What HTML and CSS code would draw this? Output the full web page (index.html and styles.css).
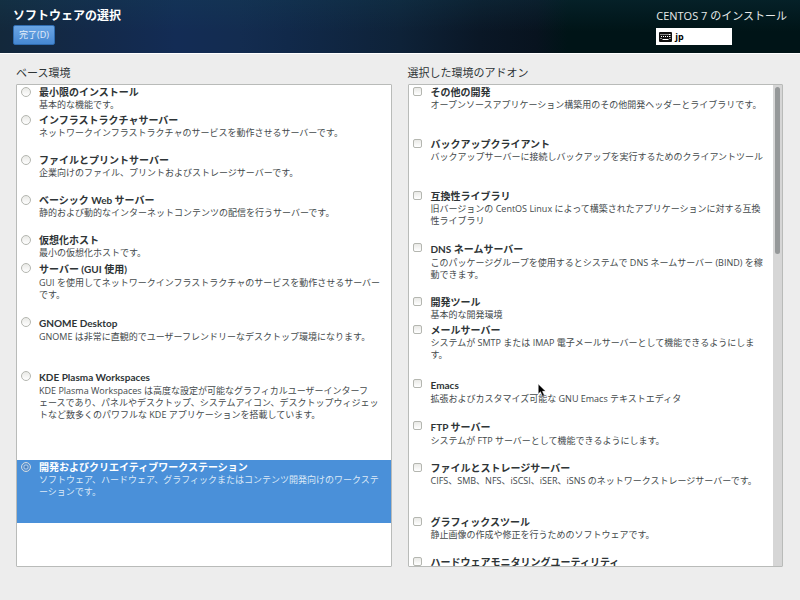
FILE: index.html
```html
<!DOCTYPE html>
<html lang="ja">
<head>
    <meta charset="UTF-8">
    <meta name="viewport" content="width=device-width, initial-scale=1.0">
    <title>ソフトウェアの選択</title>
    <link rel="stylesheet" href="styles.css">
</head>
<body>
    <header class="topbar">
        <div class="topbar-left">
            <h1>ソフトウェアの選択</h1>
            <button type="button" class="done">完了(D)</button>
        </div>
        <div class="topbar-right">
            <p class="product">CENTOS 7 のインストール</p>
            <button type="button" class="keyboard">
                <svg width="13" height="10" viewBox="0 0 13 10">
                    <rect width="13" height="10" rx="1" fill="#111"/>
                    <path d="M1.5 2.5h1M3.500 2.5h1M5.500 2.5h1M7.500 2.5h1M9.500 2.5h2M2 4.5h1M4 4.5h1M6 4.5h1M8 4.5h1M10 4.5h1.500M1.500 6.5h1M10.500 6.5h1M3.500 7.5h6" stroke="#fff" fill="none"/>
                </svg>
                <span>jp</span>
            </button>
        </div>
    </header>

    <main class="columns">
        <section class="column">
            <h2>ベース環境</h2>
            <div class="panel">
                <div class="list">
                    <label class="row h28">
                        <input type="radio" name="env">
                        <span class="text"><b>最小限のインストール</b><span class="desc">基本的な機能です。</span></span>
                    </label>
                    <label class="row h40">
                        <input type="radio" name="env">
                        <span class="text"><b>インフラストラクチャサーバー</b><span class="desc">ネットワークインフラストラクチャのサービスを動作させるサーバーです。</span></span>
                    </label>
                    <label class="row h40">
                        <input type="radio" name="env">
                        <span class="text"><b>ファイルとプリントサーバー</b><span class="desc">企業向けのファイル、プリントおよびストレージサーバーです。</span></span>
                    </label>
                    <label class="row h40">
                        <input type="radio" name="env">
                        <span class="text"><b>ベーシック Web サーバー</b><span class="desc">静的および動的なインターネットコンテンツの配信を行うサーバーです。</span></span>
                    </label>
                    <label class="row h28">
                        <input type="radio" name="env">
                        <span class="text"><b>仮想化ホスト</b><span class="desc">最小の仮想化ホストです。</span></span>
                    </label>
                    <label class="row h54">
                        <input type="radio" name="env">
                        <span class="text"><b class="mixed">サーバー (GUI 使用)</b><span class="desc">GUI を使用してネットワークインフラストラクチャのサービスを動作させるサーバー<br>です。</span></span>
                    </label>
                    <label class="row h54">
                        <input type="radio" name="env">
                        <span class="text"><b class="mixed">GNOME Desktop</b><span class="desc">GNOME は非常に直観的でユーザーフレンドリーなデスクトップ環境になります。</span></span>
                    </label>
                    <label class="row h91">
                        <input type="radio" name="env">
                        <span class="text"><b class="mixed">KDE Plasma Workspaces</b><span class="desc">KDE Plasma Workspaces は高度な設定が可能なグラフィカルユーザーインターフ<br>ェースであり、パネルやデスクトップ、システムアイコン、デスクトップウィジェッ<br>トなど数多くのパワフルな KDE アプリケーションを搭載しています。</span></span>
                    </label>
                    <label class="row h63 selected">
                        <input type="radio" name="env" checked>
                        <span class="text"><b>開発およびクリエイティブワークステーション</b><span class="desc">ソフトウェア、ハードウェア、グラフィックまたはコンテンツ開発向けのワークステ<br>ーションです。</span></span>
                    </label>
                </div>
            </div>
        </section>

        <section class="column">
            <h2>選択した環境のアドオン</h2>
            <div class="panel">
                <div class="list">
                    <label class="row h52">
                        <input type="checkbox">
                        <span class="text"><b>その他の開発</b><span class="desc">オープンソースアプリケーション構築用のその他開発ヘッダーとライブラリです。</span></span>
                    </label>
                    <label class="row h52">
                        <input type="checkbox">
                        <span class="text"><b>バックアップクライアント</b><span class="desc">バックアップサーバーに接続しバックアップを実行するためのクライアントツール</span></span>
                    </label>
                    <label class="row h52">
                        <input type="checkbox">
                        <span class="text"><b>互換性ライブラリ</b><span class="desc">旧バージョンの CentOS Linux によって構築されたアプリケーションに対する互換<br>性ライブラリ</span></span>
                    </label>
                    <label class="row h54">
                        <input type="checkbox">
                        <span class="text"><b class="mixed">DNS ネームサーバー</b><span class="desc">このパッケージグループを使用するとシステムで DNS ネームサーバー (BIND) を稼<br>動できます。</span></span>
                    </label>
                    <label class="row h28">
                        <input type="checkbox">
                        <span class="text"><b>開発ツール</b><span class="desc">基本的な開発環境</span></span>
                    </label>
                    <label class="row h54">
                        <input type="checkbox">
                        <span class="text"><b>メールサーバー</b><span class="desc">システムが SMTP または IMAP 電子メールサーバーとして機能できるようにしま<br>す。</span></span>
                    </label>
                    <label class="row h42">
                        <input type="checkbox">
                        <span class="text"><b class="mixed">Emacs</b><span class="desc">拡張およびカスタマイズ可能な GNU Emacs テキストエディタ</span></span>
                    </label>
                    <label class="row h42">
                        <input type="checkbox">
                        <span class="text"><b class="mixed">FTP サーバー</b><span class="desc">システムが FTP サーバーとして機能できるようにします。</span></span>
                    </label>
                    <label class="row h54">
                        <input type="checkbox">
                        <span class="text"><b>ファイルとストレージサーバー</b><span class="desc">CIFS、SMB、NFS、iSCSI、iSER、iSNS のネットワークストレージサーバーです。</span></span>
                    </label>
                    <label class="row h40">
                        <input type="checkbox">
                        <span class="text"><b>グラフィックスツール</b><span class="desc">静止画像の作成や修正を行うためのソフトウェアです。</span></span>
                    </label>
                    <label class="row h40">
                        <input type="checkbox">
                        <span class="text"><b>ハードウェアモニタリングユーティリティ</b></span>
                    </label>
                </div>
                <div class="scrollbar"><div class="thumb"></div></div>
            </div>
        </section>
    </main>

    <svg class="pointer" width="9" height="13" viewBox="0 0 9 13">
        <path d="M.5 .5v9l2-2 2 4.500 1.500-.7-1.800-4.300h3z" fill="#000" stroke="#888" stroke-width=".4"/>
    </svg>
</body>
</html>
```

FILE: styles.css
```css
* {
    box-sizing: border-box;
}
body {
    display: flex;
    flex-direction: column;
    height: 100vh;
    margin: 0;
    overflow: hidden;
    background: #ededed;
    color: #2e3436;
    font-family: "Open Sans", "Noto Sans CJK JP", sans-serif;
    font-size: 9px;
    line-height: 12px;
}
h1, h2, p {
    margin: 0;
}
button {
    font-family: inherit;
}

/* header */
.topbar {
    display: flex;
    justify-content: space-between;
    flex: none;
    height: 54px;
    padding: 8px 13px;
    border-bottom: 1px solid #fff;
    background:
        linear-gradient(rgba(20,70,90,0.25), rgba(20,70,90,0) 60%),
        linear-gradient(90deg, #13283b 0, #13294a 12%, #132c55 22%, #132c50 30%, #11294a 36%, #0e2238 50%, #0a1726 60%, #08131f 67%, #001417 71%, #001417 100%);
    color: #fff;
}
.topbar-left, .topbar-right {
    display: flex;
    flex-direction: column;
    align-items: flex-start;
}
.topbar h1 {
    font-size: 12px;
    line-height: 16px;
}
.done {
    height: 20px;
    margin-top: 1px;
    padding: 0 5px;
    border: 1px solid #2f6cb0;
    border-radius: 2px;
    background: linear-gradient(#6aa5e4, #4688d2);
    color: #e4eefa;
    font-size: 9px;
    line-height: 16px;
}
.product {
    font-size: 11px;
    line-height: 16px;
    color: #e8eaea;
}
.keyboard {
    display: flex;
    align-items: center;
    gap: 3px;
    width: 76px;
    height: 17px;
    margin-top: 4px;
    padding: 0 3px;
    border: 0;
    background: #fff;
    color: #000;
    font-size: 9px;
    font-weight: bold;
}

/* two lists side by side */
.columns {
    display: grid;
    grid-template-columns: minmax(0, 1fr) minmax(0, 1fr);
    gap: 16px;
    flex: 1;
    min-height: 0;
    padding: 11px 17px 33px 16px;
}
.column {
    display: flex;
    flex-direction: column;
    min-height: 0;
}
.column h2 {
    height: 19px;
    font-size: 11px;
    font-weight: normal;
    line-height: 16px;
}
.panel {
    display: flex;
    flex: 1;
    min-height: 0;
    border: 1px solid #b9bbb9;
    border-radius: 1px;
    background: #fff;
}
.list {
    flex: 1;
    min-width: 0;
    overflow: hidden;
}
.row {
    display: flex;
    gap: 8px;
    padding: 1px 4px;
    white-space: nowrap;
}
.h28 { height: 28px; }
.h40 { height: 40px; }
.h42 { height: 42px; }
.h52 { height: 52px; }
.h54 { height: 54px; }
.h63 { height: 63px; }
.h91 { height: 91px; }

.text b, .desc {
    display: block;
}
.text b {
    font-family: Lato, "Noto Sans CJK JP", sans-serif;
    font-size: 10px;
    line-height: 13px;
}
.text b.mixed {
    line-height: 15px;
}
.desc {
    color: #43494b;
}
.selected {
    background: #4a90d9;
    color: #fff;
}
.selected .desc {
    color: #dce9f7;
}

.row input {
    appearance: none;
    flex: none;
    width: 10px;
    height: 10px;
    margin: 1px 0;
    border: 1px solid #b4b6b0;
    background: linear-gradient(#e9e9e6, #fff);
}
.row input[type="radio"] {
    border-radius: 50%;
}
.row input[type="checkbox"] {
    width: 9px;
    height: 9px;
    margin-right: 1px;
    border-radius: 2px;
}
.row input[type="radio"]:checked {
    border-color: #d5dce0;
    background: radial-gradient(circle, #4a80bc 0 1px, #a8c9ec 2px, #5b93d0 3px);
}

.scrollbar {
    flex: none;
    width: 9px;
    padding: 2px;
    background: #d6d6d6;
}
.thumb {
    height: 35%;
    border-radius: 3px;
    background: #959899;
}

.pointer {
    position: absolute;
    left: 538px;
    top: 384px;
}
```
